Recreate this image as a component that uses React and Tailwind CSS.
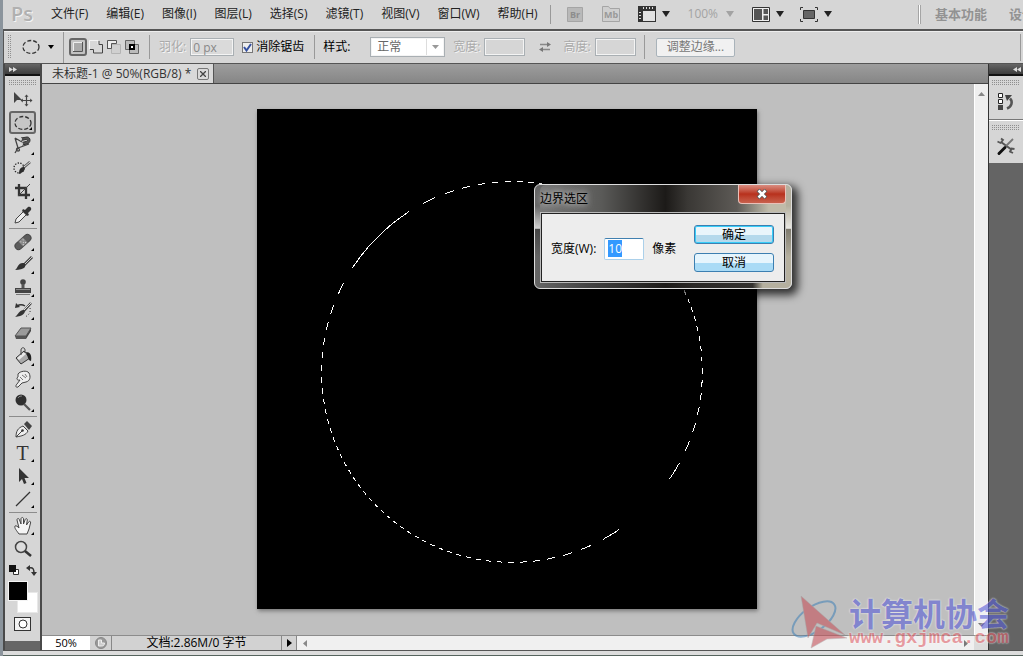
import React, { useEffect, useRef, useState } from 'react';

const MENUS = ['文件(F)', '编辑(E)', '图像(I)', '图层(L)', '选择(S)', '滤镜(T)', '视图(V)', '窗口(W)', '帮助(H)'];

const ICONS = {
  move: (
    <>
      <path d="M2 3v11l3-3h5z" fill="#444" />
      <path d="M14.500 7v9M10 11.500h9" stroke="#444" strokeWidth="1.200" />
      <path d="M14.500 5.500l2 2.300h-4zM14.500 17.500l2-2.300h-4zM8.500 11.500l2.300-2v4zM20.500 11.500l-2.300-2v4z" fill="#444" />
    </>
  ),
  marquee: <ellipse cx="11" cy="11" rx="8" ry="6.500" fill="none" stroke="#333" strokeWidth="1.300" strokeDasharray="4 2" />,
  lasso: (
    <>
      <path d="M3 3l7 4M3 3l3 10 11-4M6 13c-2 0-2 3 0 3s2-2 0-3l-3 5" fill="none" stroke="#444" strokeWidth="1.300" />
      <path d="M9 3l6-1c4 0 4 6 0 7l-5 1v-2.500l4-1c2-.500 2-2 0-2l-5 1z" fill="#555" stroke="#333" />
      <path d="M9 3v2.500M10 7.500v2.500" stroke="#eee" strokeWidth="1.500" />
    </>
  ),
  quick: (
    <>
      <circle cx="7" cy="10" r="5" fill="none" stroke="#222" strokeWidth="1.300" strokeDasharray="1.300 1.400" />
      <path d="M18 4l-7 6" stroke="#555" strokeWidth="2.500" />
      <path d="M18 4l-6 5" stroke="#ddd" />
      <path d="M12 9c2 2 0 5-5 7 0-4 1-7 5-7z" fill="#2c2c2c" />
    </>
  ),
  crop: (
    <>
      <path d="M7 3v11h11M3 7h11v11" fill="none" stroke="#333" strokeWidth="2.300" />
      <path d="M18 3L6 15" stroke="#444" />
    </>
  ),
  dropper: (
    <>
      <path d="M12 7l3 3-8 8-4 1 1-4z" fill="#eee" stroke="#444" />
      <path d="M11 5l2 1 3-3c2-1 4 1 3 3l-3 3 1 2-2 1-5-5z" fill="#333" />
    </>
  ),
  heal: (
    <>
      <g transform="rotate(-42 11 11)">
        <rect x="1.500" y="7.500" width="19" height="7" rx="3.500" fill="#5c5c5c" stroke="#444" />
        <rect x="8" y="7.500" width="6" height="7" fill="#888" />
        <path d="M9 9.500h1M12 9.500h1M10.500 11.500h1M9 13h1M12 13h1" stroke="#ddd" />
      </g>
    </>
  ),
  brush: (
    <>
      <path d="M20 3l-8 8" stroke="#444" strokeWidth="3" />
      <path d="M20 3l-7 7" stroke="#ccc" />
      <path d="M12 9c3 3 1 7-9 7 3-2 3-8 9-7z" fill="#333" />
    </>
  ),
  stamp: (
    <>
      <circle cx="11" cy="5" r="2.800" fill="#444" />
      <path d="M9.500 7h3v5h-3z" fill="#555" />
      <path d="M3 11h16v5H3z" fill="#444" />
      <path d="M4 12.500h14" stroke="#888" />
      <path d="M4 17.500h14" stroke="#777" />
    </>
  ),
  history: (
    <>
      <path d="M19 3l-8 9" stroke="#444" strokeWidth="2.500" />
      <path d="M19 3l-7 7" stroke="#ddd" />
      <path d="M12 10c2 3-1 6-9 7 3-2 4-7 9-7z" fill="#333" />
      <path d="M5 6c3-2 5-2 8 0" fill="none" stroke="#333" strokeWidth="1.500" />
      <path d="M3 8l1-5 4 4z" fill="#333" />
      <path d="M18 8c1 4-1 7-5 9" fill="none" stroke="#333" strokeDasharray="1 2" />
    </>
  ),
  eraser: (
    <>
      <path d="M9 5h10l-5 8H3z" fill="#9a9a9a" />
      <path d="M3 13h11v3H4z" fill="#555" />
      <path d="M14 13l5-8v3l-5 8z" fill="#444" />
      <path d="M9 5h10l-5 8H3z" fill="none" stroke="#555" />
    </>
  ),
  bucket: (
    <>
      <path d="M4 12l8-7 6 7-9 6z" fill="#aaa" stroke="#333" />
      <path d="M5 12l7-6 2 2-7 6z" fill="#e8e8e8" />
      <path d="M9 9V4c0-3 4-3 4 0v3" fill="none" stroke="#444" />
      <path d="M14 6c4 0 6 3 5 9-2 0-3-3-4-6z" fill="#222" />
    </>
  ),
  smudge: (
    <>
      <path d="M6 5c2-3 9-4 11-1 2 4 1 8-3 9l-4 1-4 4c-2 1-3-1-1-3l3-4c-3 1-4-2-2-3z" fill="#eee" stroke="#444" />
      <path d="M8 8l3 3M10 6l4 3M13 5l2 3" stroke="#777" />
    </>
  ),
  dodge: (
    <>
      <circle cx="9" cy="8" r="5.500" fill="#2f2f2f" />
      <path d="M12 12l6 6" stroke="#555" strokeWidth="2.200" />
      <path d="M6 6c1-2 3-2 4-2" stroke="#888" fill="none" />
    </>
  ),
  pen: (
    <>
      <path d="M4 18c0-6 2-9 7-11l5 5c-2 4-6 5-12 6z" fill="#eee" stroke="#444" />
      <path d="M4 18l6-6" stroke="#444" />
      <circle cx="10.500" cy="11.500" r="1.300" fill="#333" />
      <path d="M12 5l3-3 5 5-3 4z" fill="#444" />
    </>
  ),
  arrow: <path d="M7 3v14l3-3 2 5 2.500-1-2-5H17z" fill="#333" />,
  line: <path d="M4 18L18 4" stroke="#333" strokeWidth="1.300" />,
  hand: (
    <path
      d="M7 19c-2-3-5-6-4-8 1-1 3 1 4 2L5 5c0-2 2-2 2.500 0L9 9V4c0-2 2.500-2 2.500 0v5l1.500-4c.500-2 2.500-1.500 2.300 0L14.500 10l2-3c1-1.500 2.700-.500 2 1L17 14l-2 5z"
      fill="#f4f4f4"
      stroke="#444"
    />
  ),
  zoom: (
    <>
      <circle cx="9" cy="9" r="5.500" fill="#ddd" stroke="#444" strokeWidth="1.500" />
      <path d="M13 13l6 5" stroke="#333" strokeWidth="2.500" />
    </>
  )
};

const TOOL_GROUPS = [
  [
    { id: 'move', label: '移动工具', single: true },
    { id: 'marquee', label: '椭圆选框工具' },
    { id: 'lasso', label: '磁性套索工具' },
    { id: 'quick', label: '快速选择工具' },
    { id: 'crop', label: '裁剪工具' },
    { id: 'dropper', label: '吸管工具' }
  ],
  [
    { id: 'heal', label: '污点修复画笔工具' },
    { id: 'brush', label: '画笔工具' },
    { id: 'stamp', label: '仿制图章工具' },
    { id: 'history', label: '历史记录画笔工具' },
    { id: 'eraser', label: '橡皮擦工具' },
    { id: 'bucket', label: '油漆桶工具' },
    { id: 'smudge', label: '涂抹工具' },
    { id: 'dodge', label: '减淡工具' }
  ],
  [
    { id: 'pen', label: '钢笔工具' },
    { id: 'type', label: '横排文字工具' },
    { id: 'arrow', label: '路径选择工具' },
    { id: 'line', label: '直线工具' }
  ],
  [
    { id: 'hand', label: '抓手工具' },
    { id: 'zoom', label: '缩放工具', single: true }
  ]
];

const Caret = ({ className = 'text-[#222]' }) => (
  <svg width="8" height="6" viewBox="0 0 8 6" className={`shrink-0 ${className}`}>
    <path d="M0 0h8L4 6z" fill="currentColor" />
  </svg>
);

const Divider = ({ className = '' }) => <div className={`w-px shrink-0 bg-[#999] ${className}`} />;

const Grip = () => (
  <svg width="28" height="5" className="shrink-0">
    <defs>
      <pattern id="grip" width="2" height="2" patternUnits="userSpaceOnUse">
        <path d="M0 0h1v1H0z" fill="#8f8f8f" />
      </pattern>
    </defs>
    <rect width="28" height="5" fill="url(#grip)" />
  </svg>
);

const MenuBar = () => (
  <header className="flex h-[29px] shrink-0 items-center overflow-hidden whitespace-nowrap bg-[#d6d6d6] pl-2 pb-px">
    <span className="w-10 shrink-0 text-[20px] leading-6 font-semibold text-[#b0b0b0] [text-shadow:1px_1px_0_#f4f4f4]">Ps</span>
    <nav className="flex shrink-0 gap-[18px]">
      {MENUS.map((m) => (
        <button key={m} type="button">{m}</button>
      ))}
    </nav>
    <Divider className="ml-3 h-[19px]" />
    <button type="button" aria-label="Bridge" className="ml-4 shrink-0">
      <svg width="16" height="15" viewBox="0 0 16 15">
        <path d="M.5.5h15v14H.5z" fill="#b9b9b9" stroke="#a5a5a5" />
        <text x="3" y="11" fontSize="9" fontWeight="bold" fill="#8d8d8d">Br</text>
      </svg>
    </button>
    <button type="button" aria-label="Mini Bridge" className="ml-[19px] shrink-0">
      <svg width="18" height="16" viewBox="0 0 18 16">
        <path d="M.5 15.500V.5h6l1.500 2h9.500v13z" fill="#cfcfcf" stroke="#a5a5a5" />
        <text x="2" y="12" fontSize="9" fontWeight="bold" fill="#999">Mb</text>
      </svg>
    </button>
    <button type="button" aria-label="查看额外内容" className="ml-[18px] flex shrink-0 items-center gap-1.5">
      <svg width="18" height="16" viewBox="0 0 18 16">
        <path d="M0 0h18v16H0z" fill="#333" />
        <path d="M5 5h12v10H5z" fill="#e2e2e2" />
        <path d="M5.500 1v2M8.500 1v2M11.500 1v2M14.500 1v2M1 6.500h2M1 9.500h2M1 12.500h2" stroke="#ddd" />
      </svg>
      <Caret />
    </button>
    <button type="button" className="ml-[18px] flex shrink-0 items-center gap-2 text-[#a3a3a3]">
      100%
      <Caret className="text-[#a3a3a3]" />
    </button>
    <button type="button" aria-label="排列文档" className="ml-[18px] flex shrink-0 items-center gap-1.5">
      <svg width="18" height="15" viewBox="0 0 18 15">
        <path d="M.5.5h17v14H.5z" fill="#eee" stroke="#333" />
        <path d="M2 2h8v11H2zM11.500 2H16v5h-4.500zM11.500 8.500H16V13h-4.500z" fill="#555" />
      </svg>
      <Caret />
    </button>
    <button type="button" aria-label="屏幕模式" className="ml-4 flex shrink-0 items-center gap-1.5">
      <svg width="18" height="15" viewBox="0 0 18 15">
        <path d="M.5 3V.5H3M15 .5h2.500V3M17.500 12v2.500H15M3 14.500H.5V12" fill="none" stroke="#333" />
        <path d="M3.500 3.500h11v8h-11z" fill="#666" stroke="#333" />
      </svg>
      <Caret />
    </button>
    <div className="ml-auto flex w-[105px] shrink-0 items-center text-[13px] font-bold text-[#929292]">
      <div className="h-[19px] w-[3px] shrink-0 border-x border-[#a5a5a5] bg-white" />
      <button type="button" className="ml-3.5 shrink-0">基本功能</button>
      <button type="button" className="ml-[22px] shrink-0">设计</button>
    </div>
  </header>
);

const SelectionModes = () => (
  <div className="ml-[5px] flex shrink-0 items-center gap-1">
    <button type="button" aria-label="新选区" className="-mr-0.5 flex size-[18px] items-center justify-center rounded-[3px] border-2 border-[#666] bg-[#c3c3c3]">
      <svg width="10" height="10" viewBox="0 0 10 10"><path d="M.5.5h9v9h-9z" fill="#aaa" stroke="#eee" /><path d="M0 9.500h9.500V0" fill="none" stroke="#555" /></svg>
    </button>
    <button type="button" aria-label="添加到选区">
      <svg width="14" height="14" viewBox="0 0 14 14">
        <path d="M1 1h8v4h4v8H5V9H1z" fill="#d8d8d8" />
        <path d="M.5 9V.5H9V4" fill="none" stroke="#f4f4f4" />
        <path d="M1 9.500h3.500v3.500h9V4.500H10V1" fill="none" stroke="#444" />
      </svg>
    </button>
    <button type="button" aria-label="从选区减去">
      <svg width="14" height="14" viewBox="0 0 14 14"><path d="M4.500 4.500h9v9h-9z" fill="#d0d0d0" stroke="#b4b4b4" /><path d="M.5 9V.5h9v3h-5v5H1" fill="#eee" stroke="#555" /></svg>
    </button>
    <button type="button" aria-label="与选区交叉">
      <svg width="14" height="14" viewBox="0 0 14 14"><path d="M.5.5h9v9h-9zM4.500 4.500h9v9h-9z" fill="#bbb" stroke="#666" /><path d="M5 5h4v4H5z" fill="#fff" stroke="#000" strokeWidth="2" /></svg>
    </button>
  </div>
);

const OptionsBar = () => (
  <div className="flex h-[35px] shrink-0 items-center overflow-hidden whitespace-nowrap border-t-2 border-b border-l border-t-[#555] border-b-[#555] border-l-[#555] bg-[#d6d6d6] shadow-[inset_0_1px_0_#eee]">
    <svg width="4" height="24" className="ml-1 shrink-0"><rect width="4" height="24" fill="url(#grip)" /></svg>
    <button type="button" aria-label="椭圆选框工具预设" className="ml-2.5 flex shrink-0 items-center gap-2">
      <svg width="18" height="16" viewBox="0 0 18 16">
        <ellipse cx="9" cy="8" rx="8" ry="6.500" fill="none" stroke="#333" strokeWidth="1.300" strokeDasharray="4 2" />
      </svg>
      <svg width="6" height="4" viewBox="0 0 6 4"><path d="M0 0h6L3 4z" /></svg>
    </button>
    <Divider className="ml-[9px] h-[31px]" />
    <SelectionModes />
    <Divider className="ml-2.5 h-6" />
    <label htmlFor="feather" className="ml-[9px] shrink-0 text-[#aaa] [text-shadow:1px_1px_0_#f4f4f4]">羽化:</label>
    <input id="feather" disabled defaultValue="0 px" className="ml-1 h-[18px] w-11 shrink-0 border border-[#a9afb3] bg-[#dadada] px-0.5 text-[#888] shadow-[inset_0_0_0_1px_#f4f4f4]" />
    <label className="relative ml-2 flex shrink-0 items-center gap-[3px] text-black">
      <input type="checkbox" defaultChecked className="peer size-[11px] appearance-none border border-[#777] bg-[#eee]" />
      <svg width="9" height="9" viewBox="0 0 9 9" className="pointer-events-none absolute left-px hidden peer-checked:block">
        <path d="M1 4l2.500 3.500L8 1" fill="none" stroke="#3450a0" strokeWidth="2" />
      </svg>
      消除锯齿
    </label>
    <Divider className="ml-2.5 h-6" />
    <label htmlFor="style" className="ml-2 shrink-0 text-black">样式:</label>
    <div className="relative ml-5 flex shrink-0 items-center">
      <select id="style" className="h-5 w-[75px] appearance-none border border-[#a9afb3] bg-white px-1.5 text-[#666] shadow-[inset_0_0_0_1px_#f4f4f4]">
        <option>正常</option>
      </select>
      <svg width="7" height="4" viewBox="0 0 7 4" className="pointer-events-none absolute right-1.5"><path d="M0 0h7L3.500 4z" fill="#999" /></svg>
      <div className="pointer-events-none absolute right-[18px] h-4 w-px bg-[#ddd]" />
    </div>
    <label htmlFor="fixed-w" className="ml-2 shrink-0 text-[#aaa] [text-shadow:1px_1px_0_#f4f4f4]">宽度:</label>
    <input id="fixed-w" disabled className="ml-1 h-[18px] w-[41px] shrink-0 border border-[#a9afb3] bg-[#d6d6d6] shadow-[inset_0_0_0_1px_#f4f4f4]" />
    <button type="button" aria-label="高度和宽度互换" className="ml-3.5 shrink-0">
      <svg width="12" height="10" viewBox="0 0 12 10">
        <path d="M1 2.500h8M3 7.500h8" stroke="#888" strokeWidth="1.300" />
        <path d="M8 0l4 2.500L8 5zM4 5L0 7.500 4 10z" fill="#777" />
      </svg>
    </button>
    <label htmlFor="fixed-h" className="ml-3 shrink-0 text-[#aaa] [text-shadow:1px_1px_0_#f4f4f4]">高度:</label>
    <input id="fixed-h" disabled className="ml-1 h-[18px] w-[41px] shrink-0 border border-[#a9afb3] bg-[#d6d6d6] shadow-[inset_0_0_0_1px_#f4f4f4]" />
    <Divider className="ml-2 h-6" />
    <button type="button" className="ml-[11px] h-[19px] shrink-0 rounded-[2px] border border-[#a9b3ba] bg-[#f1f1f1] px-2.5 leading-4 text-[#777]">调整边缘...</button>
    <Divider className="mr-0.5 ml-auto h-[27px]" />
  </div>
);

const ToolButton = ({ tool, active, onSelect }) => (
  <button
    type="button"
    aria-label={tool.label}
    onClick={() => onSelect(tool.id)}
    className={`relative flex h-[23px] w-[27px] items-center justify-center ${
      active ? 'rounded-[3px] border-2 border-[#666] bg-[#c6c6c6]' : ''
    }`}
  >
    {tool.id === 'type' ? (
      <span className="font-['Liberation_Serif',serif] text-[20px] leading-5 text-[#333]">T</span>
    ) : (
      <svg width="22" height="22" viewBox="0 0 22 22" className="shrink-0">{ICONS[tool.id]}</svg>
    )}
    {!tool.single && (
      <svg width="3" height="3" viewBox="0 0 3 3" className="absolute right-0.5 bottom-0.5"><path d="M3 0v3H0z" /></svg>
    )}
  </button>
);

const Toolbox = () => {
  const [active, setActive] = useState('marquee');

  return (
    <aside className="flex w-[39px] shrink-0 flex-col border-x-2 border-[#4a4a4a] bg-[#666]">
      <div className="flex h-3 shrink-0 items-center border-b-2 border-[#111] bg-gradient-to-b from-[#666] to-[#3c3c3c] pl-1">
        <svg width="8" height="5" viewBox="0 0 8 5"><path d="M0 0l4 2.500L0 5zM4 0l4 2.500L4 5z" fill="#ddd" /></svg>
      </div>
      <div className="flex flex-col items-center bg-[#d6d6d6] pb-2.5">
        <div className="flex h-3 items-center"><Grip /></div>
        {TOOL_GROUPS.map((group, i) => (
          <React.Fragment key={group[0].id}>
            {i > 0 && (
              <div className="flex h-1 w-7 items-center"><div className="h-px w-full bg-[#8c8c8c]" /></div>
            )}
            {group.map((tool) => (
              <ToolButton key={tool.id} tool={tool} active={active === tool.id} onSelect={setActive} />
            ))}
          </React.Fragment>
        ))}
        <div className="flex h-[21px] w-7 items-center justify-between">
          <button type="button" aria-label="默认前景色和背景色">
            <svg width="11" height="11" viewBox="0 0 11 11"><path d="M4.500 4.500h5v5h-5z" fill="#fff" stroke="#333" /><path d="M0 0h7v7H0z" fill="#111" /></svg>
          </button>
          <button type="button" aria-label="切换前景色和背景色">
            <svg width="11" height="11" viewBox="0 0 11 11"><path d="M3 3c4-1 5 1 5 5" fill="none" stroke="#333" strokeWidth="1.500" /><path d="M0 3l4-3v6zM5 7h6l-3 4z" fill="#333" /></svg>
          </button>
        </div>
        <div className="relative h-8 w-[30px]">
          <button type="button" aria-label="设置背景色" className="absolute right-0 bottom-0 size-[21px] border border-[#e8e8e8] bg-white" />
          <button type="button" aria-label="设置前景色" className="absolute top-0 left-0 size-5 border border-[#f4f4f4] bg-black" />
        </div>
        <button type="button" aria-label="以快速蒙版模式编辑" className="mt-1 flex h-[14px] w-[17px] items-center justify-center border border-[#333] bg-[#f4f4f4]">
          <svg width="10" height="10" viewBox="0 0 10 10"><circle cx="5" cy="5" r="4" fill="#fff" stroke="#333" /></svg>
        </button>
      </div>
    </aside>
  );
};

// The selection edge is a ring stroked with diagonal stripes
const Artboard = () => (
  <div className="size-[500px] shrink-0 bg-black shadow-[1px_2px_4px_#777]">
    <svg width="500" height="500" viewBox="0 0 500 500" shapeRendering="crispEdges">
      <defs>
        <linearGradient id="ants" gradientUnits="userSpaceOnUse" x1="4.250" y1="4.250" x2="10.250" y2="10.250" spreadMethod="repeat">
          <stop offset="0" stopColor="#fff" />
          <stop offset="0.500" stopColor="#fff" />
          <stop offset="0.500" stopColor="#000" />
          <stop offset="1" stopColor="#000" />
        </linearGradient>
      </defs>
      <circle cx="255" cy="263" r="190.500" fill="none" stroke="url(#ants)" />
    </svg>
  </div>
);

const StatusBar = () => (
  <footer className="flex h-[15px] shrink-0 border-t border-[#8c8c8c] bg-[#f0f0f0] text-[11px] text-black">
    <input aria-label="缩放" defaultValue="50%" className="w-12 bg-white text-center" />
    <button type="button" aria-label="状态" className="flex w-[22px] items-center justify-center border-r border-[#888] bg-[#d2d2d2]">
      <svg width="12" height="12" viewBox="0 0 12 12"><circle cx="6" cy="6" r="5.500" fill="#999" stroke="#888" /><path d="M3.500 9V3h3v3h3c0 2-1 3-3 3z" fill="#ccc" stroke="#eee" /></svg>
    </button>
    <div className="flex w-[170px] items-center justify-center border-r border-[#888] bg-[#d2d2d2] text-[12px]">文档:2.86M/0 字节</div>
    <button type="button" aria-label="显示" className="flex w-[15px] items-center justify-center border-r border-[#888] bg-[#d2d2d2]">
      <svg width="5" height="8" viewBox="0 0 5 8"><path d="M0 0l5 4-5 4z" /></svg>
    </button>
    <div className="flex flex-1 items-center justify-between px-1.5">
      <svg width="4" height="7" viewBox="0 0 4 7"><path d="M4 0v7L0 3.500z" fill="#888" /></svg>
      <svg width="4" height="7" viewBox="0 0 4 7"><path d="M0 0v7l4-3.500z" fill="#777" /></svg>
    </div>
    <div className="w-[14px] bg-[#dcdcdc]" />
  </footer>
);

const DocumentWindow = () => (
  <main className="flex min-w-0 flex-1 flex-col">
    <div className="flex h-5 shrink-0 border-b border-[#444] bg-gradient-to-b from-[#9d9d9d] to-[#868686]">
      <div className="flex items-center gap-1.5 border-r border-[#555] bg-[#d9d9d9] pr-1 pl-2.5 text-[#333]">
        <span className="whitespace-pre">未标题-1 @ 50%(RGB/8) *</span>
        <button type="button" aria-label="关闭" className="flex size-3 items-center justify-center rounded-[2px] border border-[#777]">
          <svg width="6" height="6" viewBox="0 0 6 6"><path d="M0 0l6 6M6 0L0 6" stroke="#444" strokeWidth="1.300" /></svg>
        </button>
      </div>
    </div>
    <div className="flex min-h-0 flex-1">
      <div className="flex min-w-0 flex-1 items-center justify-center overflow-hidden bg-[#bfbfbf] pr-0.5 pb-px">
        <Artboard />
      </div>
      <div className="flex w-[14px] shrink-0 flex-col items-center justify-between border-l border-white bg-[#efefef] py-2">
        <svg width="7" height="4" viewBox="0 0 7 4"><path d="M0 4h7L3.500 0z" fill="#888" /></svg>
        <svg width="7" height="4" viewBox="0 0 7 4"><path d="M0 0h7L3.500 4z" fill="#777" /></svg>
      </div>
    </div>
    <StatusBar />
  </main>
);

const PanelDock = () => (
  <aside className="flex w-[35px] shrink-0 flex-col border-l border-[#333] bg-[#646464]">
    <div className="flex h-3 shrink-0 items-center justify-end border-b-2 border-[#111] bg-gradient-to-b from-[#666] to-[#3c3c3c] pr-0.5">
      <svg width="8" height="5" viewBox="0 0 8 5"><path d="M4 0L0 2.500 4 5zM8 0L4 2.500 8 5z" fill="#ddd" /></svg>
    </div>
    <div className="flex h-11 flex-col items-center gap-2 border-b border-[#777] bg-[#d6d6d6] pt-1">
      <Grip />
      <button type="button" aria-label="历史记录">
        <svg width="16" height="18" viewBox="0 0 16 18">
          <path d="M.5.5h4v4h-4zM.5 6.500h4v4h-4z" fill="#fff" stroke="#222" />
          <path d="M0 12h5v5H0z" fill="#444" />
          <path d="M9 15.500c5-2 6-7 3-10" fill="none" stroke="#555" strokeWidth="2.500" />
          <path d="M7 2h7l-5 6z" fill="#444" />
        </svg>
      </button>
    </div>
    <div className="flex h-[43px] flex-col items-center gap-1.5 border-t border-white bg-[#d6d6d6] pt-1">
      <Grip />
      <button type="button" aria-label="工具预设">
        <svg width="20" height="20" viewBox="0 0 20 20">
          <path d="M5 6l11 8" stroke="#555" strokeWidth="2" />
          <path d="M1.500 5.500l3 1.500 2.500-3-2-1.500M18.500 13l-3-.500-1.500 3 3 1.500" fill="none" stroke="#555" strokeWidth="1.800" />
          <path d="M17 3l-7 7" stroke="#777" strokeWidth="1.800" />
          <path d="M9 11.500l-6 6" stroke="#111" strokeWidth="3" strokeLinecap="round" />
        </svg>
      </button>
    </div>
  </aside>
);

const BorderDialog = () => {
  const widthRef = useRef(null);
  const [width, setWidth] = useState('10');

  useEffect(() => {
    widthRef.current.focus();
    widthRef.current.select();
  }, []);

  return (
    <section
      role="dialog"
      aria-labelledby="dialog-title"
      className="absolute top-[184px] left-[531px] w-[258px] rounded-md border border-[#ddd] bg-[linear-gradient(to_bottom,transparent_20%,rgba(255,255,255,0.7)_42%,rgba(0,0,0,0.3)_43%,transparent_70%),linear-gradient(to_right,#666_0%,#444_20%,#1c1a18_51%,#2a2826_62%,#33312e_85%,#b5b09f_89%)] px-[5px] pb-[5px] text-black shadow-[4px_4px_9px_2px_rgba(0,0,0,0.75)]"
    >
      <div className="flex h-[27px] items-start justify-between rounded-t-md bg-[linear-gradient(to_right,#777_0%,#5a5a58_25%,#1c1a18_51%,#3a3835_60%,#5d5a56_80%,#c0bbaa_93%)]">
        <h1 id="dialog-title" className="pt-[5px] text-[12px] leading-[18px] [text-shadow:0_0_6px_#ccc,0_0_8px_#bbb]">边界选区</h1>
        <button type="button" aria-label="关闭" className="flex h-[19px] w-12 items-center justify-center rounded-b-[4px] border border-t-0 border-[#eac0b8] bg-gradient-to-b from-[#d98c80] via-[#b8301c] to-[#c8604c]">
          <svg width="12" height="10" viewBox="0 0 12 10">
            <path d="M2 1l8 8M10 1L2 9" stroke="#555" strokeWidth="4" />
            <path d="M2.500 1.500l7 7M9.500 1.500l-7 7" stroke="#fff" strokeWidth="2.500" />
          </svg>
        </button>
      </div>
      <div className="border border-[#bbb]">
        <form onSubmit={(e) => e.preventDefault()} className="flex items-center border border-[#222] bg-[#ededed] pt-[11px] pr-2.5 pb-[9px] pl-[9px]">
          <label htmlFor="border-width" className="shrink-0">宽度(W):</label>
          <input
            id="border-width"
            ref={widthRef}
            value={width}
            onChange={(e) => setWidth(e.target.value)}
            className="ml-2 h-[22px] w-10 rounded-[2px] border border-[#abd0ea] border-t-[#4080b0] bg-white px-[3px] outline-none selection:bg-[#3399ff] selection:text-white"
          />
          <span className="ml-2">像素</span>
          <div className="ml-auto flex flex-col gap-[9px]">
            <button type="submit" className="h-[19px] w-20 rounded-[3px] border border-[#3c7fb1] bg-gradient-to-b from-[#eaf5fb] from-50% to-[#b5d9ec] to-55% leading-4 shadow-[inset_0_0_0_1px_#38cdf8]">确定</button>
            <button type="button" className="h-[19px] w-20 rounded-[3px] border border-[#3c7fb1] bg-gradient-to-b from-[#e6f5fd] from-50% to-[#a9dbf6] to-55% leading-4">取消</button>
          </div>
        </form>
      </div>
    </section>
  );
};

const Watermark = () => (
  <div className="pointer-events-none absolute right-3.5 bottom-1.5 flex items-center opacity-60">
    <svg width="58" height="56" viewBox="0 0 58 56" className="shrink-0">
      <ellipse cx="23" cy="25" rx="25" ry="12" transform="rotate(-36 23 25)" fill="none" stroke="#4a86b8" strokeWidth="2" />
      <path d="M10 2l44 39-28-12-9 15z" fill="#c4525a" stroke="#999" strokeWidth="0.500" />
      <path d="M25 32l31 12-20 1-16 9z" fill="#c4525a" stroke="#999" strokeWidth="0.500" />
    </svg>
    <div className="whitespace-nowrap">
      <p className="font-['Noto_Sans_CJK_SC',sans-serif] text-[32px] leading-8 font-bold text-[#5a60d8] [text-shadow:0_0_2px_#fff,0_0_2px_#fff]">计算机协会</p>
      <p className="font-['Liberation_Mono',monospace] text-[19px] leading-5 font-bold text-[#e0626a] [text-shadow:0_0_2px_#fff,0_0_2px_#fff]">www.gxjmca.com</p>
    </div>
  </div>
);

const App = () => (
  <div className="relative flex h-screen flex-col overflow-hidden border-l-[3px] border-[#8b949c] bg-[#e4e4e4] font-['Open_Sans','Noto_Sans_CJK_SC',sans-serif] text-[12px] leading-4 text-[#222]">
    <MenuBar />
    <OptionsBar />
    <div className="flex min-h-0 flex-1">
      <Toolbox />
      <DocumentWindow />
      <PanelDock />
    </div>
    <div className="h-1.5 shrink-0 border-t border-b border-t-[#555] border-b-[#56645e] bg-[#dcdcdc]" />
    <BorderDialog />
    <Watermark />
  </div>
);

export default App;
